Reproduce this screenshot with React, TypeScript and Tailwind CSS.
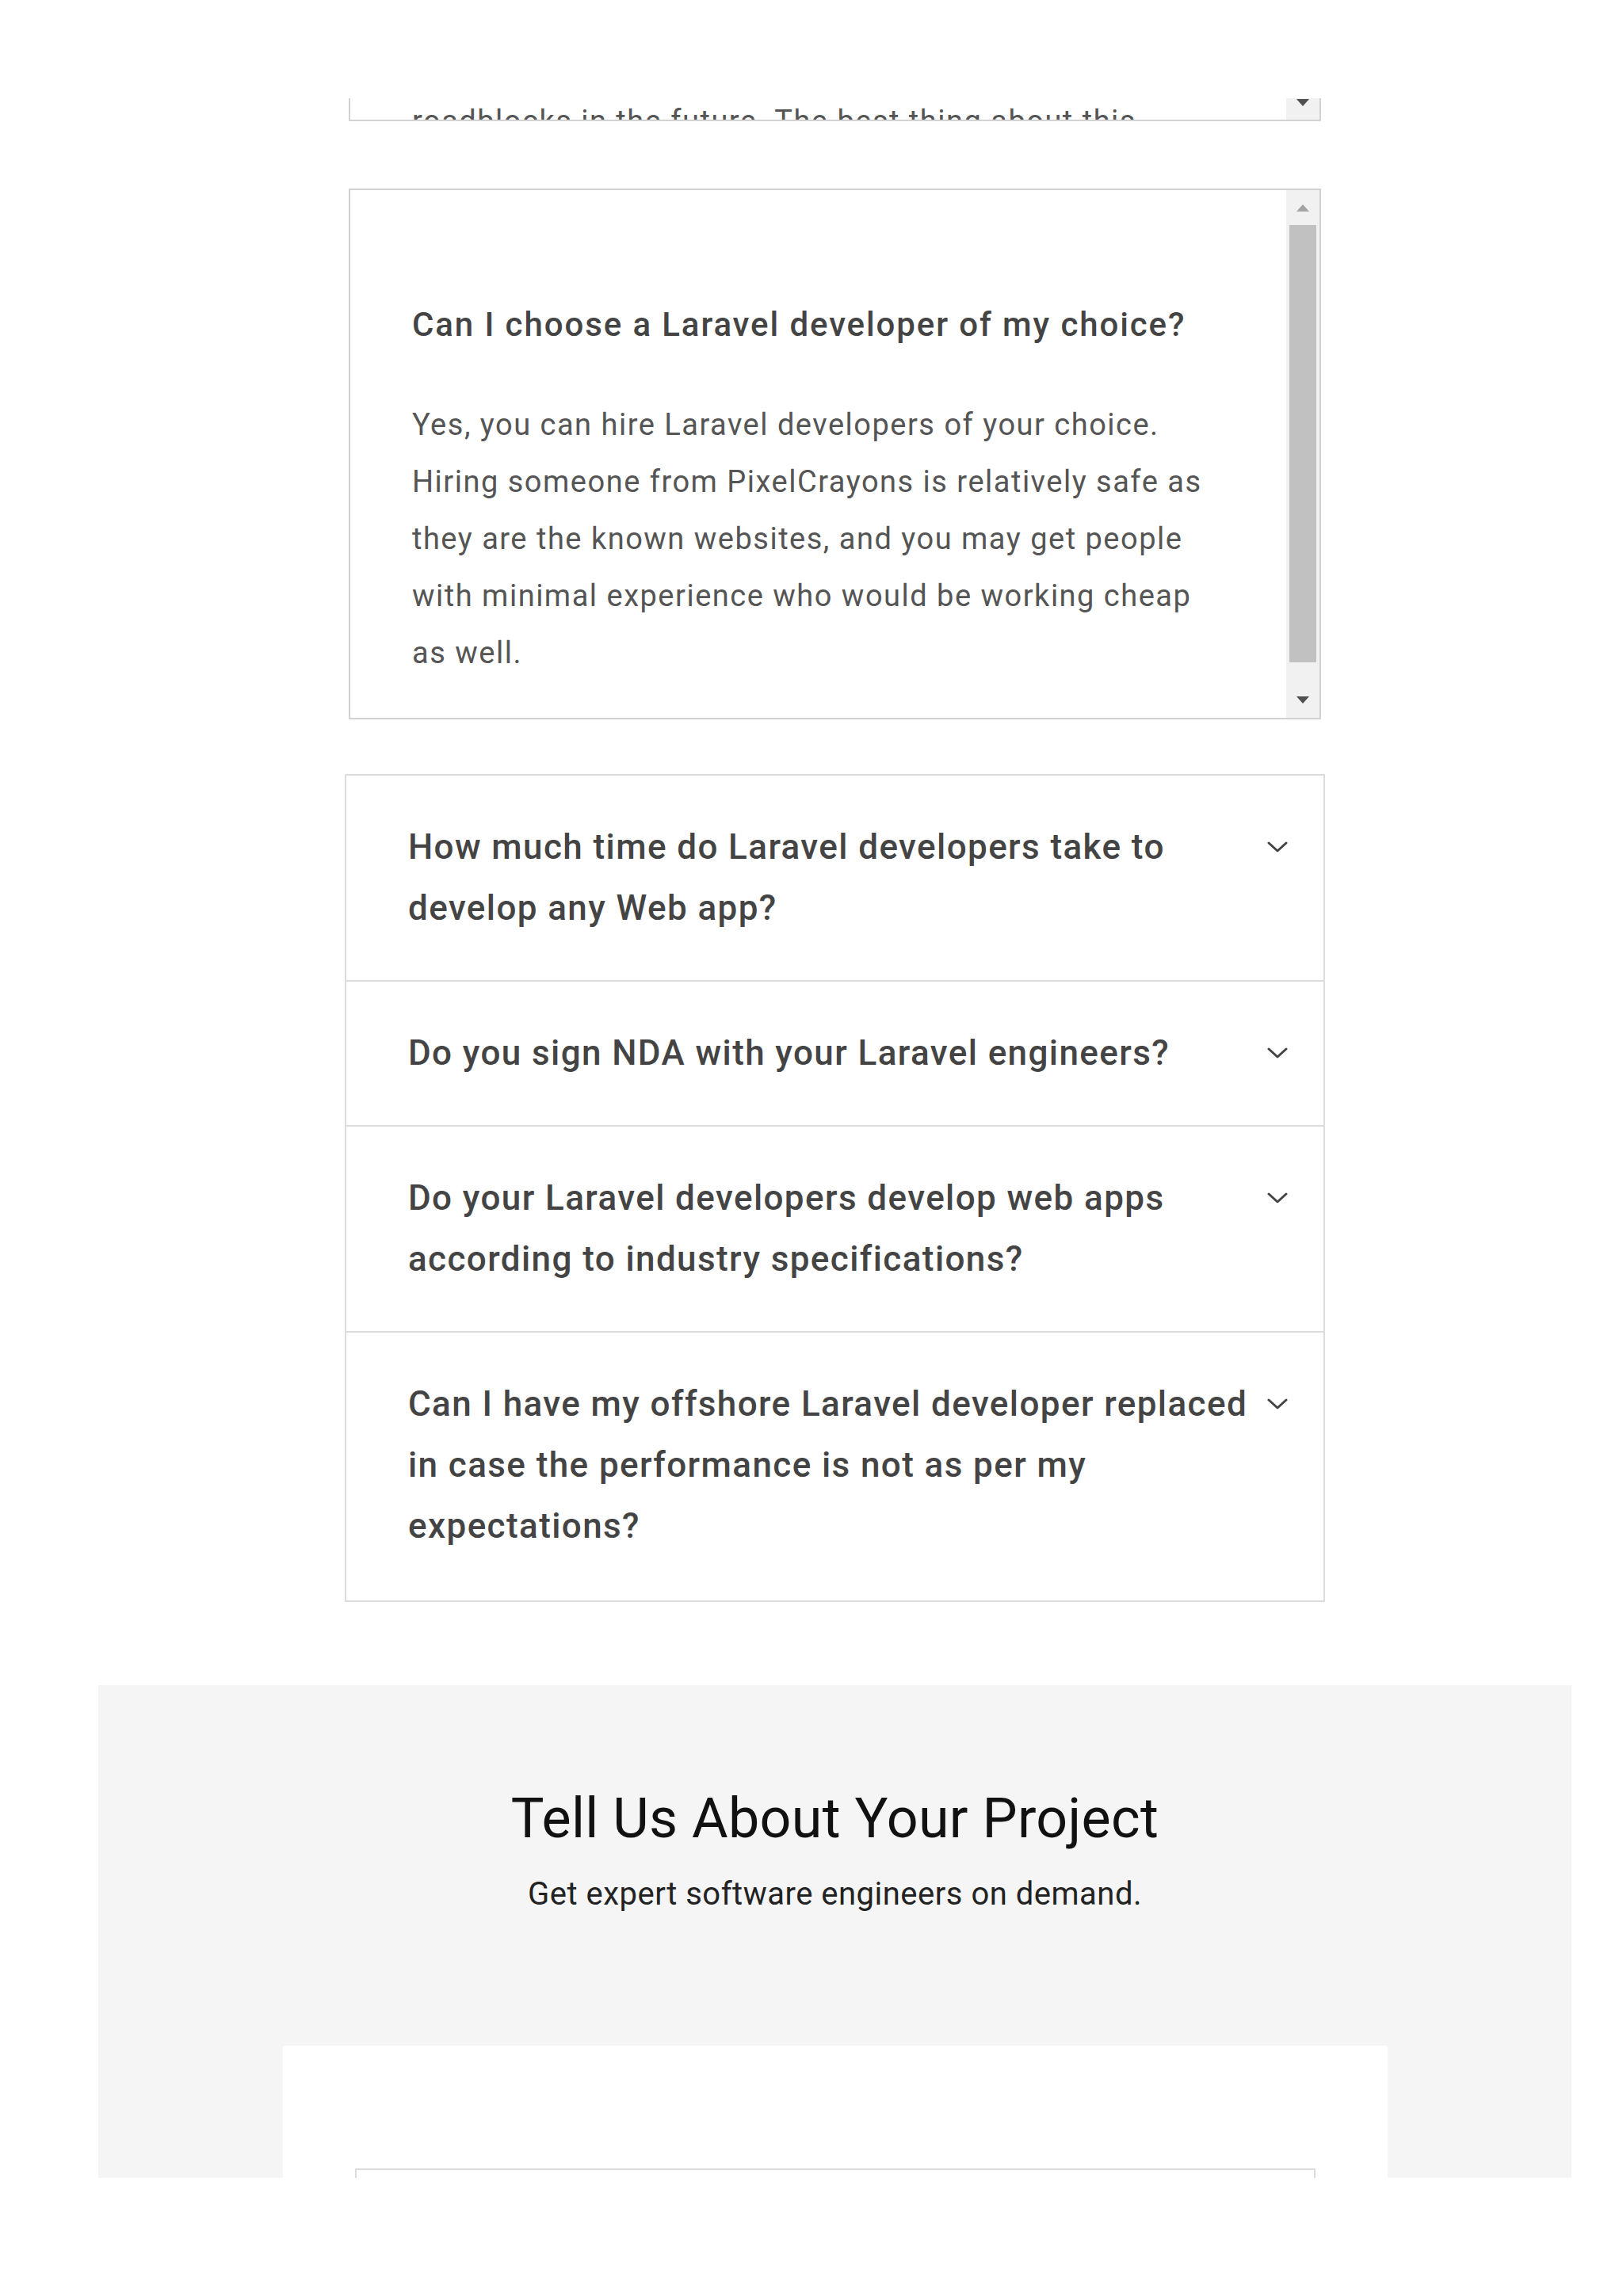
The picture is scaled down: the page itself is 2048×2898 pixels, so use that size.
import React from 'react';

// FAQ block + "Tell us" section, everything centred on the same column
const questions: string[][] = [
  ['How much time do Laravel developers take to', 'develop any Web app?'],
  ['Do you sign NDA with your Laravel engineers?'],
  ['Do your Laravel developers develop web apps', 'according to industry specifications?'],
  ['Can I have my offshore Laravel developer replaced', 'in case the performance is not as per my', 'expectations?'],
];

const answer = [
  'Yes, you can hire Laravel developers of your choice.',
  'Hiring someone from PixelCrayons is relatively safe as',
  'they are the known websites, and you may get people',
  'with minimal experience who would be working cheap',
  'as well.',
];

function TriUp({ color }: { color: string }) {
  return (
    <svg width="16" height="9" viewBox="0 0 16 9">
      <path d="M8 0 L16 9 L0 9 Z" fill={color} />
    </svg>
  );
}

function TriDown({ color }: { color: string }) {
  return (
    <svg width="16" height="9" viewBox="0 0 16 9">
      <path d="M0 0 L16 0 L8 9 Z" fill={color} />
    </svg>
  );
}

function Chevron() {
  return (
    <svg width="26" height="14" viewBox="0 0 26 14" fill="none">
      <path d="M2 2 L13 12 L24 2" stroke="#444" strokeWidth="3" strokeLinecap="round" strokeLinejoin="round" />
    </svg>
  );
}

export default function App() {
  return (
    <div className="min-h-[2898px] bg-white font-['Roboto','Liberation_Sans',sans-serif]">
      <div className="w-[1859px] ml-[124px] flex flex-col items-center pt-[124px]">
        {/* previous answer, scrolled almost out of view */}
        <div className="w-[1227px] h-[29px] flex border-x-2 border-b-2 border-[#d2d2d2] overflow-hidden">
          <div className="flex-1 pl-[78px] overflow-hidden">
            <p className="-mt-[7px] text-[38px] leading-[72px] tracking-[1.5px] text-[#555] whitespace-nowrap">
              roadblocks in the future. The best thing about this
            </p>
          </div>
          <div className="w-[42px] bg-[#f1f1f1] flex justify-center pt-[1px]">
            <TriDown color="#505050" />
          </div>
        </div>

        {/* open answer */}
        <div className="mt-[85px] w-[1227px] h-[670px] flex border-2 border-[#d2d2d2]">
          <div className="flex-1 pl-[78px] pt-[142px]">
            <h3 className="text-[42px] leading-[56px] tracking-[1.9px] font-medium text-[#444] whitespace-nowrap">
              Can I choose a Laravel developer of my choice?
            </h3>
            <p className="mt-[62px] text-[38px] leading-[72px] tracking-[1.5px] text-[#555]">
              {answer.map((l) => (
                <span key={l} className="block whitespace-nowrap">{l}</span>
              ))}
            </p>
          </div>
          <div className="w-[42px] bg-[#f1f1f1] flex flex-col items-center">
            <div className="h-[44px] flex items-center justify-center">
              <TriUp color="#a3a3a3" />
            </div>
            <div className="w-[34px] h-[552px] bg-[#c1c1c1]" />
            <div className="flex-1 flex items-end justify-center pb-[18px]">
              <TriDown color="#505050" />
            </div>
          </div>
        </div>

        {/* collapsed questions */}
        <div className="mt-[69px] w-[1237px] border-2 border-[#dcdcdc]">
          {questions.map((q, i) => (
            <div
              key={i}
              className={`flex items-start pl-[78px] ${i < questions.length - 1 ? 'py-[52px] border-b-2 border-[#dcdcdc]' : 'pt-[52px] pb-[55px]'}`}
            >
              <div className="flex-1 text-[44px] leading-[77px] tracking-[1.4px] font-medium text-[#444]">
                {q.map((l) => (
                  <span key={l} className="block whitespace-nowrap">{l}</span>
                ))}
              </div>
              <div className="mt-[31px] mr-[45px]">
                <Chevron />
              </div>
            </div>
          ))}
        </div>
      </div>

      {/* contact section */}
      <div className="mt-[105px] w-[1859px] ml-[124px] h-[622px] bg-[#f5f5f5] overflow-hidden flex flex-col items-center">
        <h2 className="pt-[126px] text-[70px] leading-[84px] font-normal tracking-[0.3px] text-[#111]">
          Tell Us About Your Project
        </h2>
        <p className="mt-[28px] text-[40px] leading-[52px] tracking-[0.5px] text-[#222]">
          Get expert software engineers on demand.
        </p>
        <div className="mt-[165px] w-[1394px] flex-1 bg-white pt-[155px] px-[91px]">
          <div className="h-[40px] border-2 border-[#dcdcdc]" />
        </div>
      </div>
    </div>
  );
}
